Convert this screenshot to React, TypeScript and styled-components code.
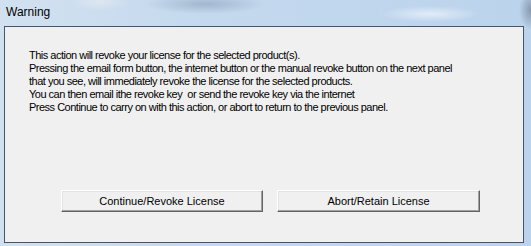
import styled, { createGlobalStyle } from "styled-components";

const GlobalStyle = createGlobalStyle`
	html, body {
		margin: 0;
		padding: 0;
		background: #c6daee;
	}
`;

// Aero glass frame around the dialog
const Frame = styled.div`
	width: 531px;
	height: 246px;
	display: flex;
	flex-direction: column;
	box-sizing: border-box;
	padding: 0 7px 3px 4px;
	background:
		radial-gradient(ellipse 60px 10px at 205px 4px, rgba(150, 170, 195, 0.75), rgba(150, 170, 195, 0) 100%),
		radial-gradient(ellipse 30px 9px at 100px 2px, rgba(225, 232, 240, 0.8), rgba(225, 232, 240, 0) 100%),
		radial-gradient(ellipse 50px 8px at 430px 14px, rgba(235, 242, 250, 0.8), rgba(235, 242, 250, 0) 100%),
		radial-gradient(ellipse 12px 20px at 531px 10px, rgba(110, 125, 145, 0.7), rgba(110, 125, 145, 0) 100%),
		linear-gradient(90deg, #d2e1f0 0%, #c4d9ee 40%, #bbd3ec 100%);
	font-family: "Liberation Sans", Arial, sans-serif;
`;

const TitleBar = styled.div`
	height: 26px;
	box-sizing: border-box;
	padding: 5px 0 0 2px;
	font-size: 12px;
	line-height: 14px;
	color: #000;
`;

const Panel = styled.div`
	flex: 1;
	display: flex;
	flex-direction: column;
	border: 1px solid #46566a;
	background: #f0f0f0;
	padding: 22px 0 30px 24px;
`;

const Message = styled.div`
	font-size: 11px;
	line-height: 13px;
	letter-spacing: -0.5px;
	color: #000;
	white-space: pre;
`;

const ButtonRow = styled.div`
	margin-top: auto;
	padding-left: 32px;
	display: flex;
	gap: 14px;
`;

const DialogButton = styled.button<{ $width: number }>`
	width: ${(p) => p.$width}px;
	height: 22px;
	box-sizing: border-box;
	padding: 0;
	background: #f0f0f0;
	border: 1px solid;
	border-color: #ffffff #646464 #646464 #ffffff;
	box-shadow: inset -1px -1px 0 #a0a0a0, inset 1px 1px 0 #e3e3e3;
	font-family: "Liberation Sans", Arial, sans-serif;
	font-size: 11px;
	color: #000;
	cursor: pointer;
`;

const lines = [
	"This action will revoke your license for the selected product(s).",
	"Pressing the email form button, the internet button or the manual revoke button on the next panel",
	"that you see, will immediately revoke the license for the selected products.",
	"You can then email ithe revoke key  or send the revoke key via the internet",
	"Press Continue to carry on with this action, or abort to return to the previous panel.",
];

export default function App() {
	return (
		<>
			<GlobalStyle />
			<Frame>
				<TitleBar>Warning</TitleBar>
				<Panel>
					<Message>
						{lines.map((line) => (
							<div key={line}>{line}</div>
						))}
					</Message>
					<ButtonRow>
						<DialogButton $width={202}>Continue/Revoke License</DialogButton>
						<DialogButton $width={203}>Abort/Retain License</DialogButton>
					</ButtonRow>
				</Panel>
			</Frame>
		</>
	);
}
